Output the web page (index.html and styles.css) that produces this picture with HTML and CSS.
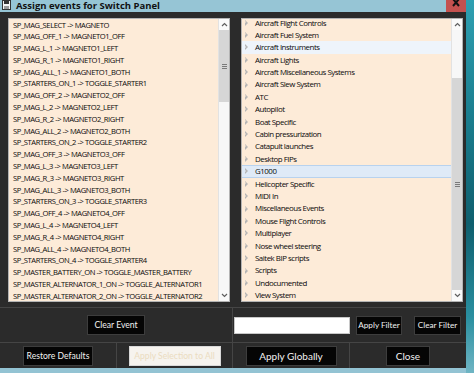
FILE: index.html
```html
<!DOCTYPE html>
<html>
<head>
<meta charset="utf-8">
<link rel="stylesheet" href="styles.css">
</head>
<body>
<div class="screen">
  <div class="window">
    <div class="titlebar">
      <svg class="app-icon" width="9" height="10" viewBox="0 0 9 10"><rect x="0.5" y="0.5" width="8" height="9" fill="#f4f4f4" stroke="#333"/><rect x="2" y="1" width="5" height="3" fill="#333"/><rect x="2" y="6" width="5" height="3" fill="#999"/></svg>
      <span class="title">Assign events for Switch Panel</span>
      <div class="close-btn"><svg width="8" height="8" viewBox="0 0 8 8"><path d="M1 0 L7 7 M7 0 L1 7" stroke="#111" stroke-width="2"/></svg></div>
    </div>
    <div class="content">
      <div class="lists">
        <div class="listbox">
          <div class="items">
            <div class="item">SP_MAG_SELECT -&gt; MAGNETO</div>
            <div class="item">SP_MAG_OFF_1 -&gt; MAGNETO1_OFF</div>
            <div class="item">SP_MAG_L_1 -&gt; MAGNETO1_LEFT</div>
            <div class="item">SP_MAG_R_1 -&gt; MAGNETO1_RIGHT</div>
            <div class="item">SP_MAG_ALL_1 -&gt; MAGNETO1_BOTH</div>
            <div class="item">SP_STARTERS_ON_1 -&gt; TOGGLE_STARTER1</div>
            <div class="item">SP_MAG_OFF_2 -&gt; MAGNETO2_OFF</div>
            <div class="item">SP_MAG_L_2 -&gt; MAGNETO2_LEFT</div>
            <div class="item">SP_MAG_R_2 -&gt; MAGNETO2_RIGHT</div>
            <div class="item">SP_MAG_ALL_2 -&gt; MAGNETO2_BOTH</div>
            <div class="item">SP_STARTERS_ON_2 -&gt; TOGGLE_STARTER2</div>
            <div class="item">SP_MAG_OFF_3 -&gt; MAGNETO3_OFF</div>
            <div class="item">SP_MAG_L_3 -&gt; MAGNETO3_LEFT</div>
            <div class="item">SP_MAG_R_3 -&gt; MAGNETO3_RIGHT</div>
            <div class="item">SP_MAG_ALL_3 -&gt; MAGNETO3_BOTH</div>
            <div class="item">SP_STARTERS_ON_3 -&gt; TOGGLE_STARTER3</div>
            <div class="item">SP_MAG_OFF_4 -&gt; MAGNETO4_OFF</div>
            <div class="item">SP_MAG_L_4 -&gt; MAGNETO4_LEFT</div>
            <div class="item">SP_MAG_R_4 -&gt; MAGNETO4_RIGHT</div>
            <div class="item">SP_MAG_ALL_4 -&gt; MAGNETO4_BOTH</div>
            <div class="item">SP_STARTERS_ON_4 -&gt; TOGGLE_STARTER4</div>
            <div class="item">SP_MASTER_BATTERY_ON -&gt; TOGGLE_MASTER_BATTERY</div>
            <div class="item">SP_MASTER_ALTERNATOR_1_ON -&gt; TOGGLE_ALTERNATOR1</div>
            <div class="item">SP_MASTER_ALTERNATOR_2_ON -&gt; TOGGLE_ALTERNATOR2</div>
          </div>
          <div class="scrollbar">
            <div class="arrow"><svg width="7" height="5" viewBox="0 0 7 5"><path d="M1 4 L3.5 1.5 L6 4" fill="none" stroke="#606060" stroke-width="1.2"/></svg></div>
            <div class="thumb left-thumb"><span class="grip"></span></div>
            <div class="track fill"></div>
            <div class="arrow"><svg width="7" height="5" viewBox="0 0 7 5"><path d="M1 1 L3.5 3.5 L6 1" fill="none" stroke="#606060" stroke-width="1.2"/></svg></div>
          </div>
        </div>
        <div class="listbox">
          <div class="items tree">
            <div class="node"><span class="tri"></span>Aircraft Flight Controls</div>
            <div class="node"><span class="tri"></span>Aircraft Fuel System</div>
            <div class="node hover"><span class="tri"></span>Aircraft Instruments</div>
            <div class="node"><span class="tri"></span>Aircraft Lights</div>
            <div class="node"><span class="tri"></span>Aircraft Miscellaneous Systems</div>
            <div class="node"><span class="tri"></span>Aircraft Slew System</div>
            <div class="node"><span class="tri"></span>ATC</div>
            <div class="node"><span class="tri"></span>Autopilot</div>
            <div class="node"><span class="tri"></span>Boat Specific</div>
            <div class="node"><span class="tri"></span>Cabin pressurization</div>
            <div class="node"><span class="tri"></span>Catapult launches</div>
            <div class="node"><span class="tri"></span>Desktop FIPs</div>
            <div class="node selected"><span class="tri"></span>G1000</div>
            <div class="node"><span class="tri"></span>Helicopter Specific</div>
            <div class="node"><span class="tri"></span>MIDI In</div>
            <div class="node"><span class="tri"></span>Miscellaneous Events</div>
            <div class="node"><span class="tri"></span>Mouse Flight Controls</div>
            <div class="node"><span class="tri"></span>Multiplayer</div>
            <div class="node"><span class="tri"></span>Nose wheel steering</div>
            <div class="node"><span class="tri"></span>Saitek BIP scripts</div>
            <div class="node"><span class="tri"></span>Scripts</div>
            <div class="node"><span class="tri"></span>Undocumented</div>
            <div class="node"><span class="tri"></span>View System</div>
          </div>
          <div class="scrollbar">
            <div class="arrow"><svg width="7" height="5" viewBox="0 0 7 5"><path d="M1 4 L3.5 1.5 L6 4" fill="none" stroke="#606060" stroke-width="1.2"/></svg></div>
            <div class="track right-top"></div>
            <div class="thumb fill"><span class="grip"></span></div>
            <div class="arrow"><svg width="7" height="5" viewBox="0 0 7 5"><path d="M1 1 L3.5 3.5 L6 1" fill="none" stroke="#606060" stroke-width="1.2"/></svg></div>
          </div>
        </div>
      </div>
      <div class="row row1">
        <div class="cell center"><button class="btn">Clear Event</button></div>
        <div class="cell filter">
          <input class="filter-input" type="text">
          <button class="btn small">Apply Filter</button>
          <button class="btn small">Clear Filter</button>
        </div>
      </div>
      <div class="row row2">
        <div class="cell center"><button class="btn">Restore Defaults</button></div>
        <div class="cell center"><button class="btn disabled">Apply Selection to All</button></div>
        <div class="cell center"><button class="btn big">Apply Globally</button></div>
        <div class="cell center"><button class="btn big close">Close</button></div>
      </div>
    </div>
    <div class="frame-bottom"></div>
  </div>
  <div class="desktop"></div>
</div>
</body>
</html>
```

FILE: styles.css
```css
html, body {
  margin: 0;
  padding: 0;
  background: #2b2b2b;
}
.screen {
  display: flex;
  width: 474px;
  height: 373px;
  overflow: hidden;
  font-family: "Open Sans", "Noto Sans", sans-serif;
}
.window {
  width: 466px;
  display: flex;
  flex-direction: column;
  background: #2b2b2b;
}
.desktop {
  flex: 1;
  background: linear-gradient(180deg, #2fa0b2 0%, #1b7f90 30%, #0f5f6e 60%, #2a8fa0 85%, #6fb5c4 100%);
}
.titlebar {
  height: 12px;
  background: #96c5d5;
  display: flex;
  align-items: center;
}
.app-icon {
  margin-left: 2px;
  margin-top: -2px;
}
.title {
  margin-left: 5px;
  font-weight: 700;
  font-size: 9.5px;
  line-height: 11px;
  color: #111;
  margin-top: -2px;
}
.close-btn {
  margin-left: auto;
  width: 20px;
  height: 12px;
  background: #c4514f;
  display: flex;
  justify-content: center;
  align-items: flex-start;
}
.close-btn svg {
  margin-top: -1px;
}
.content {
  flex: 1;
  display: flex;
  flex-direction: column;
}
.lists {
  display: flex;
  gap: 11px;
  padding: 6px 3px 0 8px;
  height: 284px;
}
.listbox {
  width: 222px;
  height: 284px;
  box-sizing: border-box;
  border: 1px solid #b4b4b4;
  background: #fdebd8;
  display: flex;
  overflow: hidden;
}
.items {
  flex: 1;
  padding-top: 0.5px;
  font-size: 7.6px;
  letter-spacing: -0.42px;
  color: #0a0a0a;
  font-weight: 500;
}
.item {
  height: 11.8px;
  line-height: 11.8px;
  padding-left: 4px;
  white-space: nowrap;
}
.tree {
  margin-top: -3px;
  font-size: 7.9px;
  letter-spacing: -0.47px;
}
.node {
  height: 12.4px;
  line-height: 12.4px;
  padding-left: 3px;
  box-sizing: border-box;
  display: flex;
  align-items: center;
  white-space: nowrap;
}
.node.hover {
  background: #eef4fb;
}
.node.selected {
  background: #dfeaf7;
  border-top: 1px solid #b8d2ee;
  border-bottom: 1px solid #b8d2ee;
}
.tri {
  width: 0;
  height: 0;
  border-top: 3px solid transparent;
  border-bottom: 3px solid transparent;
  border-left: 3.5px solid #b5b5b5;
  margin-right: 7px;
  position: relative;
}
.tri::after {
  content: "";
  position: absolute;
  left: -3px;
  top: -1.6px;
  border-top: 1.6px solid transparent;
  border-bottom: 1.6px solid transparent;
  border-left: 1.8px solid #fdebd8;
}
.hover .tri::after { border-left-color: #eef4fb; }
.selected .tri::after { border-left-color: #dfeaf7; }
.scrollbar {
  width: 10px;
  display: flex;
  flex-direction: column;
  background: #f4f4f4;
  border-left: 1px solid #e2e2e2;
}
.arrow {
  height: 11px;
  display: flex;
  align-items: center;
  justify-content: center;
  background: #fafafa;
}
.track {
  background: #f7f7f7;
}
.right-top { height: 48px; }
.thumb {
  background: #d6d6d6;
  display: flex;
  align-items: center;
  justify-content: center;
}
.left-thumb { height: 72px; }
.fill { flex: 1; }
.grip {
  width: 5px;
  height: 5px;
  background: repeating-linear-gradient(180deg, #7a7a7a 0 1px, transparent 1px 2px);
}
.row {
  display: grid;
  border-top: 1px solid #454545;
}
.row1 {
  margin-top: 5px;
  height: 34px;
  grid-template-columns: 233px 1fr;
}
.row2 {
  height: 25px;
  grid-template-columns: 117px 116px 117px 1fr;
}
.cell {
  border-right: 1px solid #454545;
  display: flex;
  align-items: center;
}
.cell:last-child {
  border-right: none;
}
.center {
  justify-content: center;
}
.btn {
  font-family: Lato, "Open Sans", sans-serif;
  font-size: 8.6px;
  color: #f2f2f2;
  background: #050505;
  border: 1px solid #3d3d3d;
  height: 20px;
  padding: 0;
  margin: 0;
  white-space: nowrap;
}
.row1 .btn { width: 58px; }
.row2 .btn { width: 70px; }
.row2 .btn.disabled {
  width: 92px;
  background: #f6f3ee;
  border-color: #d9d9d9;
  color: #ebdcc0;
}
.row2 .btn.big { width: 91px; font-size: 10px; }
.row2 .btn.close { width: 44px; }
.filter {
  padding-left: 1px;
}
.filter-input {
  width: 116px;
  height: 17px;
  box-sizing: border-box;
  border: 1px solid #c8c8c8;
  background: #fff;
  margin: 0;
  padding: 0;
}
.row1 .btn.small {
  width: 46px;
  height: 19px;
  font-size: 8.2px;
  margin-left: 6px;
}
.row1 .btn.small:last-child {
  width: 47px;
  margin-left: 12px;
}
.frame-bottom {
  height: 5px;
  background: #93c3d3;
}
```
